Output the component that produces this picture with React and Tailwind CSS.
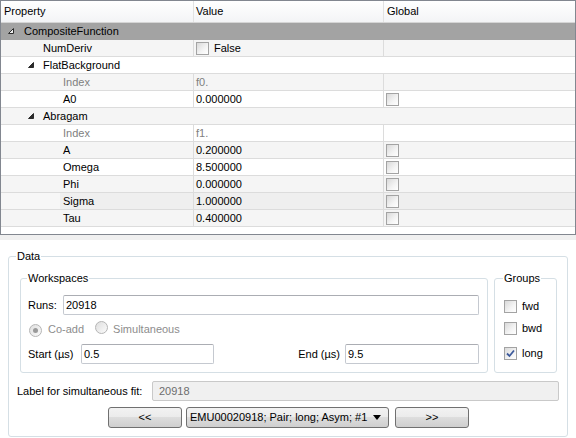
import React from "react";

function Arrow({ outline }) {
  return (
    <svg width="6" height="6" viewBox="0 0 6 6" className="shrink-0">
      <polygon
        points="5.5,0.5 5.5,5.5 0.5,5.5"
        fill={outline ? "#f0f0f0" : "#2b2b2b"}
        stroke="#2b2b2b"
        strokeWidth="1"
      />
    </svg>
  );
}

function Check({ checked }) {
  return (
    <span className="inline-flex w-[13px] h-[13px] shrink-0 items-center justify-center border border-[#a3a3a3] bg-[linear-gradient(135deg,#d9d9d9_0%,#f4f4f4_60%,#ffffff_100%)]">
      {checked && (
        <svg width="11" height="11" viewBox="0 0 11 11">
          <path d="M2 5.5 L4.5 8 L9 2.5" fill="none" stroke="#3d5a9c" strokeWidth="1.8" />
        </svg>
      )}
    </span>
  );
}

function Radio({ dot }) {
  return (
    <span className="inline-flex w-[13px] h-[13px] shrink-0 items-center justify-center rounded-full border border-[#b5b5b5] bg-[linear-gradient(135deg,#dedede,#fbfbfb)]">
      {dot && <span className="w-[5px] h-[5px] rounded-full bg-[#9a9a9a]" />}
    </span>
  );
}

function GroupRow({ label, pad, bg, border, outline }) {
  return (
    <div className={`flex h-[17px] items-center border-b ${border} ${bg} ${pad}`}>
      <Arrow outline={outline} />
      <span className={outline ? "ml-[10px]" : "ml-[9px]"}>{label}</span>
    </div>
  );
}

function PropRow({ label, value, gray, global, bg, checkValue, pad }) {
  return (
    <div className={`flex h-[17px] border-b border-[#dcdcdc] ${bg}`}>
      <div className={`w-[193px] shrink-0 flex items-center border-r border-[#dcdcdc] ${pad} ${gray ? "text-[#808080]" : ""}`}>
        {label}
      </div>
      <div className={`w-[190px] shrink-0 flex items-center border-r border-[#dcdcdc] pl-[2px] ${gray ? "text-[#808080]" : ""}`}>
        {checkValue ? (
          <>
            <Check />
            <span className="ml-[5px]">{value}</span>
          </>
        ) : (
          value
        )}
      </div>
      <div className="flex-1 flex items-center pl-[2px]">{global && <Check />}</div>
    </div>
  );
}

function SigmaRow() {
  return (
    <div className="flex h-[17px] border-b border-[#dcdcdc] bg-[#f7f7f7]">
      <div className="w-[193px] shrink-0 flex border-r border-[#dcdcdc]">
        <div className="w-[59px] shrink-0" />
        <div className="flex-1 flex items-center bg-[#efefef] pl-[3px]">Sigma</div>
      </div>
      <div className="w-[190px] shrink-0 flex items-center border-r border-[#dcdcdc] pl-[2px] bg-[#efefef]">
        1.000000
      </div>
      <div className="flex-1 flex items-center pl-[2px] bg-[#efefef]">
        <Check />
      </div>
    </div>
  );
}

function TextBox({ value, className }) {
  return (
    <div
      className={`h-[20px] flex items-center rounded-[2px] border border-[#c5c9d0] border-t-[#abadb3] bg-white ${className}`}
    >
      {value}
    </div>
  );
}

function GroupBox({ title, className, children, labelLeft }) {
  return (
    <div className={`relative rounded-[3px] border border-[#d5dfe5] ${className}`}>
      <span className={`absolute top-[-8px] bg-white px-[1px] leading-[14px] ${labelLeft}`}>{title}</span>
      {children}
    </div>
  );
}

function Btn({ children, className }) {
  return (
    <div
      className={`h-[21px] flex items-center rounded-[3px] border border-[#707070] bg-[linear-gradient(to_bottom,#f2f2f2_0%,#ebebeb_50%,#dddddd_50%,#cfcfcf_100%)] ${className}`}
    >
      {children}
    </div>
  );
}

export default function App() {
  return (
    <div className="w-[576px] h-[438px] flex flex-col bg-[#f0f0f0] text-[11px] text-black font-['Liberation_Sans',Arial,sans-serif] overflow-hidden">
      {/* Property browser */}
      <div className="h-[235px] shrink-0 flex flex-col border border-[#828790] bg-white">
        <div className="flex h-[22px] shrink-0 border-b border-[#d5d5d5] bg-[linear-gradient(to_bottom,#ffffff,#f3f4f6)]">
          <div className="w-[193px] shrink-0 flex items-center border-r border-[#e2e2e2] pl-[3px]">Property</div>
          <div className="w-[190px] shrink-0 flex items-center border-r border-[#e2e2e2] pl-[2px]">Value</div>
          <div className="flex-1 flex items-center pl-[3px]">Global</div>
        </div>
        <GroupRow label="CompositeFunction" pad="pl-[7px]" bg="bg-[#a3a3a3]" border="border-[#a3a3a3]" outline />
        <PropRow label="NumDeriv" value="False" checkValue bg="bg-[#f5f5f5]" pad="pl-[42px]" />
        <GroupRow label="FlatBackground" pad="pl-[27px]" bg="bg-white" border="border-[#dcdcdc]" />
        <PropRow label="Index" value="f0." gray bg="bg-[#f5f5f5]" pad="pl-[62px]" />
        <PropRow label="A0" value="0.000000" global bg="bg-white" pad="pl-[62px]" />
        <GroupRow label="Abragam" pad="pl-[27px]" bg="bg-[#f5f5f5]" border="border-[#dcdcdc]" />
        <PropRow label="Index" value="f1." gray bg="bg-white" pad="pl-[62px]" />
        <PropRow label="A" value="0.200000" global bg="bg-[#f5f5f5]" pad="pl-[62px]" />
        <PropRow label="Omega" value="8.500000" global bg="bg-white" pad="pl-[62px]" />
        <PropRow label="Phi" value="0.000000" global bg="bg-[#f5f5f5]" pad="pl-[62px]" />
        <SigmaRow />
        <PropRow label="Tau" value="0.400000" global bg="bg-[#f5f5f5]" pad="pl-[62px]" />
      </div>

      {/* Data panel */}
      <div className="mt-[5px] flex-1 bg-white px-[8px] pt-[16px]">
        <GroupBox title="Data" labelLeft="left-[7px]" className="h-[181px] pl-[8px] pr-[8px] pt-[21px] flex flex-col">
          <div className="flex">
            <GroupBox
              title="Workspaces"
              labelLeft="left-[6px]"
              className="ml-[3px] w-[468px] h-[95px] pl-[7px] pr-[8px] pt-[16px] flex flex-col"
            >
              <div className="flex items-center h-[20px]">
                <span className="w-[35px] shrink-0">Runs:</span>
                <TextBox value="20918" className="flex-1 pl-[2px]" />
              </div>
              <div className="flex items-center h-[29px] text-[#8d8d8d]">
                <span className="ml-[1px]"><Radio dot /></span>
                <span className="ml-[6px]">Co-add</span>
                <span className="ml-[11px]"><Radio /></span>
                <span className="ml-[5px]">Simultaneous</span>
              </div>
              <div className="flex items-center h-[20px]">
                <span className="w-[53px] shrink-0">Start (µs)</span>
                <TextBox value="0.5" className="w-[133px] pl-[2px]" />
                <div className="flex-1" />
                <span className="mr-[5px]">End (µs)</span>
                <TextBox value="9.5" className="w-[134px] pl-[2px]" />
              </div>
            </GroupBox>
            <GroupBox
              title="Groups"
              labelLeft="left-[8px]"
              className="ml-[6px] w-[63px] h-[95px] pl-[9px] pt-[21px] flex flex-col"
            >
              <div className="flex items-center h-[13px]">
                <Check />
                <span className="ml-[5px]">fwd</span>
              </div>
              <div className="flex items-center h-[13px] mt-[9px]">
                <Check />
                <span className="ml-[5px]">bwd</span>
              </div>
              <div className="flex items-center h-[13px] mt-[12px]">
                <Check checked />
                <span className="ml-[5px]">long</span>
              </div>
            </GroupBox>
          </div>
          <div className="flex items-center h-[20px] mt-[8px]">
            <span className="w-[135px] shrink-0">Label for simultaneous fit:</span>
            <div className="flex-1 h-[20px] flex items-center rounded-[2px] border border-[#c9c9c9] bg-[#f0f0f0] text-[#6d6d6d] pl-[6px]">
              20918
            </div>
          </div>
          <div className="flex mt-[6px] ml-[91px]">
            <Btn className="w-[74px] justify-center">&lt;&lt;</Btn>
            <Btn className="ml-[4px] w-[203px] pl-[3px] pr-[7px] justify-between">
              <span>EMU00020918; Pair; long; Asym; #1</span>
              <svg width="8" height="5" viewBox="0 0 8 5">
                <polygon points="0,0 8,0 4,5" fill="#000" />
              </svg>
            </Btn>
            <Btn className="ml-[6px] w-[74px] justify-center">&gt;&gt;</Btn>
          </div>
        </GroupBox>
      </div>
    </div>
  );
}
